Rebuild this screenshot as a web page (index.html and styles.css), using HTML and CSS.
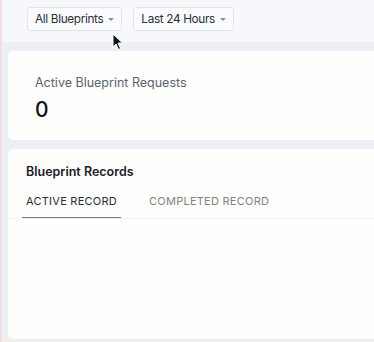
FILE: index.html
```html
<!DOCTYPE html>
<html>
<head>
    <meta charset="UTF-8">
    <title>Blueprint Dashboard</title>
    <link rel="stylesheet" href="styles.css">
</head>
<body>
<div class="page">
    <div class="toolbar">
        <button class="drop">All Blueprints <span class="caret"></span></button>
        <button class="drop">Last 24 Hours <span class="caret"></span></button>
    </div>
    <div class="main">
        <div class="card stat">
            <p class="stat-label">Active Blueprint Requests</p>
            <p class="stat-value">0</p>
        </div>
        <div class="card records">
            <h3 class="records-title">Blueprint Records</h3>
            <ul class="tabs">
                <li class="tab active">ACTIVE RECORD</li>
                <li class="tab">COMPLETED RECORD</li>
            </ul>
        </div>
    </div>
</div>
<svg class="pointer" width="12" height="18" viewBox="0 0 12 18">
    <path d="M1 1 L1 14 L4 11 L6.5 16.5 L8.5 15.5 L6 10 L10.5 10 Z" fill="#111" stroke="#fff" stroke-width="1"/>
</svg>
</body>
</html>
```
FILE: styles.css
```css
* {
    margin: 0;
    padding: 0;
    box-sizing: border-box;
}

ul, li {
    list-style: none;
}

html, body {
    width: 100%;
    height: 100%;
    overflow: hidden;
}

body {
    font-family: Inter, "Noto Sans", sans-serif;
    background: #eceff5;
    border-left: 2px solid #f3dede;
}

.page {
    display: flex;
    flex-direction: column;
    height: 100%;
}

.toolbar {
    display: flex;
    gap: 11px;
    height: 42px;
    padding: 7px 0 0 25px;
    background: #f7f8fb;
}

.drop {
    display: flex;
    align-items: center;
    gap: 5px;
    height: 24px;
    padding: 0 7px 0 7px;
    font-family: inherit;
    font-size: 11.8px;
    letter-spacing: -0.35px;
    color: #2b2f36;
    background: #fafbfd;
    border: 1px solid #e2e5ec;
    border-radius: 3px;
}

.caret {
    width: 0;
    height: 0;
    border-left: 3px solid transparent;
    border-right: 3px solid transparent;
    border-top: 3px solid #8a8f98;
}

.main {
    flex: 1;
    display: flex;
    flex-direction: column;
    gap: 9px;
    padding: 9px 0 2px 6px;
    border-bottom: 1px solid #f8efe2;
}

.card {
    background: #fefefd;
    border-radius: 5px 0 0 5px;
}

.stat {
    height: 89px;
    padding: 24px 0 0 27px;
}

.stat-label {
    font-size: 12.5px;
    line-height: 16px;
    color: #5b626d;
}

.stat-value {
    margin-top: 7px;
    font-size: 21px;
    line-height: 24px;
    font-weight: 500;
    color: #111;
}

.records {
    flex: 1;
    padding-top: 15px;
}

.records-title {
    padding-left: 18px;
    font-size: 12.5px;
    line-height: 16px;
    font-weight: 600;
    color: #1d2027;
}

.tabs {
    display: flex;
    margin-top: 14px;
    border-bottom: 1px solid #f1f2f5;
}

.tab {
    padding: 0 0 9px;
    margin-left: 14px;
    font-size: 11px;
    line-height: 14px;
    letter-spacing: 0.25px;
    color: #7e8187;
}

.tab.active {
    padding: 0 4px 9px;
    color: #2b2e34;
    border-bottom: 1.5px solid #7a7c82;
    margin-right: 14px;
}

.pointer {
    position: absolute;
    left: 112px;
    top: 33px;
}
```
